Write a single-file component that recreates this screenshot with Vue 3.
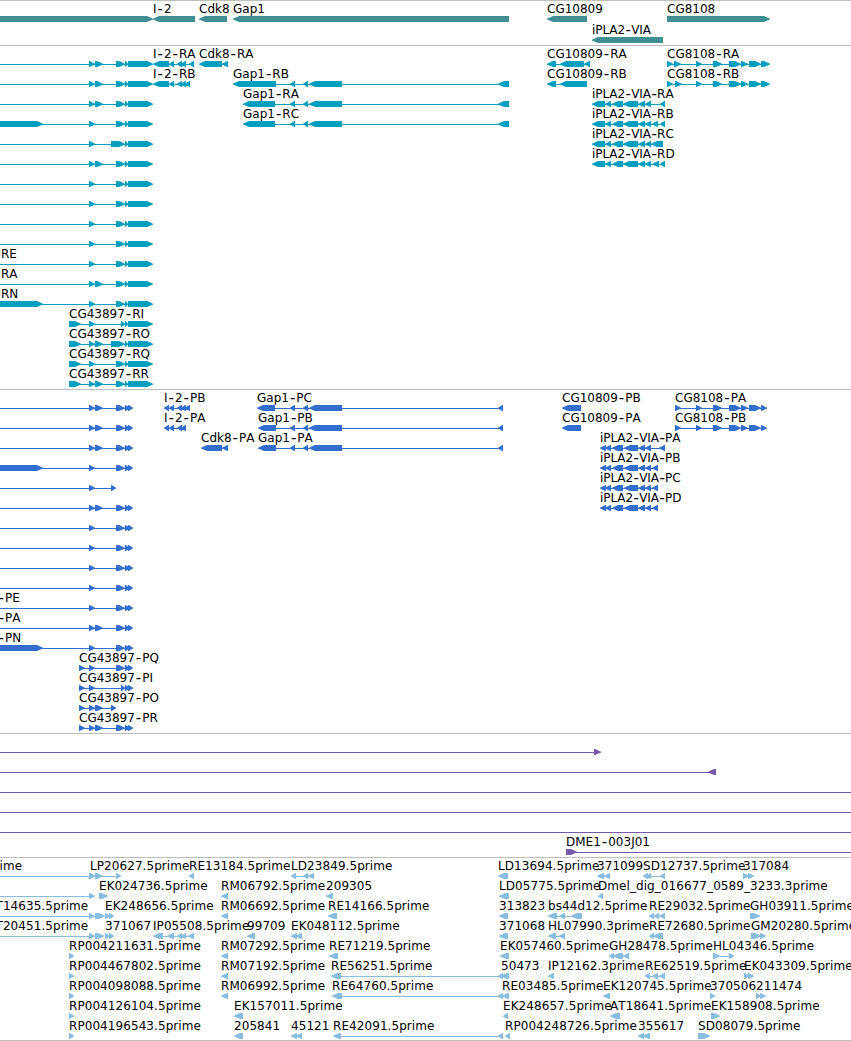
<script setup>
// 每条记录: [行, 方向, 标签, 标签x, 外显子, 连线起点, 连线终点]
const WIDTH = 851;
const OUT = 860;

const rnaTail = "116,125 125,128 128,153";
const cdsTail = "116,125 125,130 128,133";

const tracks = [
  {
    name: "gene",
    height: 44,
    step: 21,
    items: [
      [0, ">", "", 0, "-8,153"],
      [0, "<", "I-2", 153, "153,195"],
      [0, "<", "Cdk8", 199, "199,227"],
      [0, "<", "Gap1", 233, "233,509"],
      [0, "<", "CG10809", 547, "547,587"],
      [0, ">", "CG8108", 667, "667,770"],
      [1, "<", "iPLA2-VIA", 592, "592,663"],
    ],
  },
  {
    name: "rna",
    height: 343,
    step: 20,
    items: [
      [0, ">", "", 0, `89,95 95,103 ${rnaTail}`, -5],
      [1, ">", "", 0, `89,95 95,103 ${rnaTail}`, -5],
      [2, ">", "", 0, `89,95 95,103 ${rnaTail}`, -5],
      [3, ">", "", 0, `-8,43 89,95 ${rnaTail}`],
      [4, ">", "", 0, "89,95 111,125 125,128 128,153", -5],
      [5, ">", "", 0, `89,95 95,103 ${rnaTail}`, -5],
      [6, ">", "", 0, `89,95 ${rnaTail}`, -5],
      [7, ">", "", 0, `89,95 ${rnaTail}`, -5],
      [8, ">", "", 0, `89,95 ${rnaTail}`, -5],
      [9, ">", "", 0, `89,95 ${rnaTail}`, -5],
      [10, ">", "RE", 1, `89,95 ${rnaTail}`, -5],
      [11, ">", "RA", 1, `89,95 95,103 ${rnaTail}`, -5],
      [12, ">", "RN", 1, `-8,43 89,95 ${rnaTail}`],
      [13, ">", "CG43897-RI", 69, "69,81 89,95 121,125 125,128 128,153"],
      [14, ">", "CG43897-RO", 69, "69,81 89,95 95,103 111,125 125,128 128,153"],
      [15, ">", "CG43897-RQ", 69, `69,81 89,95 ${rnaTail}`],
      [16, ">", "CG43897-RR", 69, `69,81 89,95 95,103 ${rnaTail}`],
      [0, "<", "I-2-RA", 153, "153,169 169,174 177,182 181,186 189,194"],
      [1, "<", "I-2-RB", 153, "153,169 169,174 177,182 181,186 185,190"],
      [0, "<", "Cdk8-RA", 199, "199,222 222,228"],
      [1, "<", "Gap1-RB", 233, "233,276 290,295 303,308 309,342 498,509"],
      [2, "<", "Gap1-RA", 243, "243,275 290,295 303,308 309,342 498,509"],
      [3, "<", "Gap1-RC", 243, "243,275 290,295 303,308 309,342 498,509"],
      [0, "<", "CG10809-RA", 547, "547,556 560,584 584,590"],
      [1, "<", "CG10809-RB", 547, "547,556 560,587"],
      [0, ">", "CG8108-RA", 667, "667,673 674,681 696,702 713,722 729,741 741,748 749,761 761,770"],
      [1, ">", "CG8108-RB", 667, "667,673 675,682 696,702 713,722 729,741 741,748 749,761 761,770"],
      [2, "<", "iPLA2-VIA-RA", 592, "592,605 605,611 612,623 623,638 638,645 645,651 660,665"],
      [3, "<", "iPLA2-VIA-RB", 592, "592,605 605,611 612,623 623,638 638,645 645,651 652,658 660,665"],
      [4, "<", "iPLA2-VIA-RC", 592, "592,605 605,611 612,623 623,638 638,645 645,651 651,663"],
      [5, "<", "iPLA2-VIA-RD", 592, "592,605 605,611 612,623 623,638 638,645 645,651 652,659 660,665"],
    ],
  },
  {
    name: "cds",
    height: 343,
    step: 20,
    items: [
      [0, ">", "", 0, `89,95 95,103 ${cdsTail}`, -5],
      [1, ">", "", 0, `89,95 95,103 ${cdsTail}`, -5],
      [2, ">", "", 0, `89,95 95,103 ${cdsTail}`, -5],
      [3, ">", "", 0, `-8,43 89,95 ${cdsTail}`],
      [4, ">", "", 0, "89,95 111,116", -5],
      [5, ">", "", 0, `89,95 95,103 ${cdsTail}`, -5],
      [6, ">", "", 0, `89,95 ${cdsTail}`, -5],
      [7, ">", "", 0, `89,95 ${cdsTail}`, -5],
      [8, ">", "", 0, `89,95 ${cdsTail}`, -5],
      [9, ">", "", 0, `89,95 ${cdsTail}`, -5],
      [10, ">", "-PE", -1.5, `89,95 ${cdsTail}`, -5],
      [11, ">", "-PA", -1.5, `89,95 95,103 ${cdsTail}`, -5],
      [12, ">", "-PN", -1.5, `-8,43 89,95 ${cdsTail}`],
      [13, ">", "CG43897-PQ", 79, `79,85 89,95 ${cdsTail}`],
      [14, ">", "CG43897-PI", 79, "79,85 89,95 121,125 125,130 128,133"],
      [15, ">", "CG43897-PO", 79, "79,85 89,95 95,103 111,116"],
      [16, ">", "CG43897-PR", 79, `79,85 89,95 95,103 ${cdsTail}`],
      [0, "<", "I-2-PB", 164, "164,169 169,174 177,182 181,186 185,190"],
      [1, "<", "I-2-PA", 164, "164,169 169,174 177,182 181,186"],
      [2, "<", "Cdk8-PA", 201, "201,222 222,228"],
      [0, "<", "Gap1-PC", 257, "257,275 290,295 303,308 309,342 498,503"],
      [1, "<", "Gap1-PB", 258, "258,276 290,295 303,308 309,342 498,503"],
      [2, "<", "Gap1-PA", 258, "258,276 290,295 303,308 309,342 498,503"],
      [0, "<", "CG10809-PB", 562, "562,581"],
      [1, "<", "CG10809-PA", 562, "562,581"],
      [0, ">", "CG8108-PA", 675, "675,681 696,702 713,722 729,741 741,748 749,761 761,767"],
      [1, ">", "CG8108-PB", 675, "675,681 696,702 713,722 729,741 741,748 749,761 761,767"],
      [2, "<", "iPLA2-VIA-PA", 600, "600,606 605,611 612,623 624,638 638,645 645,651 659,665"],
      [3, "<", "iPLA2-VIA-PB", 600, "600,606 605,611 612,623 624,638 638,645 645,651 652,658"],
      [4, "<", "iPLA2-VIA-PC", 600, "600,606 605,611 612,623 624,638 638,645 645,651 652,658"],
      [5, "<", "iPLA2-VIA-PD", 600, "600,606 605,611 612,623 624,638 638,645 645,651 652,658"],
    ],
  },
  {
    name: "bac",
    height: 123,
    step: 20,
    items: [
      [0, ">", "", 0, "594,601", -5],
      [1, "<", "", 0, "708,716", -5],
      [2, ">", "", 0, "", -5, OUT],
      [3, ">", "", 0, "", -5, OUT],
      [4, ">", "", 0, "", -5, OUT],
      [5, ">", "DME1-003J01", 566, "566,577", 566, OUT],
    ],
  },
  {
    name: "est",
    height: 182,
    step: 20,
    items: [
      [0, ">", "ime", -0.5, "89,95", -5],
      [0, ">", "LP20627.5prime", 90, "90,95 95,103 116,121"],
      [0, "<", "RE13184.5prime", 189, "189,194"],
      [0, "<", "LD23849.5prime", 291, "291,296 303,308 308,314"],
      [0, "<", "LD13694.5prime", 498, "498,508"],
      [0, "<", "371099", 597, "597,604 604,610"],
      [0, "<", "SD12737.5prime", 643, "643,648 647,651 660,665"],
      [0, ">", "317084", 743, "743,749 748,754"],

      [1, ">", "", 0, "89,95", -5],
      [1, ">", "EK024736.5prime", 99, "99,108"],
      [1, "<", "RM06792.5prime", 221, "221,228"],
      [1, "<", "209305", 326, "326,333"],
      [1, "<", "LD05775.5prime", 499, "499,509"],
      [1, "<", "Dmel_dig_016677_0589_3233.3prime", 598, "598,603"],

      [2, ">", "T14635.5prime", -4.5, "89,95 95,105", -5],
      [2, ">", "EK248656.5prime", 105, "105,110 109,114"],
      [2, "<", "RM06692.5prime", 221, "221,228"],
      [2, "<", "RE14166.5prime", 328, "328,337"],
      [2, "<", "313823", 499, "499,508"],
      [2, "<", "bs44d12.5prime", 548, "548,557 559,565 571,582"],
      [2, "<", "RE29032.5prime", 649, "649,654 654,659 659,665"],
      [2, ">", "GH03911.5prime", 750, "750,760"],

      [3, ">", "T20451.5prime", -4.5, "89,95 95,104", -5],
      [3, ">", "371067", 105, "105,110 109,114"],
      [3, "<", "IP05508.5prime", 153, "153,163 167,174 177,182 181,186 188,194"],
      [3, "<", "99709", 247, "247,255"],
      [3, "<", "EK048112.5prime", 291, "291,297 296,302"],
      [3, "<", "371068", 499, "499,508"],
      [3, "<", "HL07990.3prime", 548, "548,556 559,565"],
      [3, "<", "RE72680.5prime", 649, "649,654 653,663"],
      [3, ">", "GM20280.5prime", 751, "751,761 760,766"],

      [4, ">", "RP004211631.5prime", 69, "69,74"],
      [4, "<", "RM07292.5prime", 221, "221,228"],
      [4, "<", "RE71219.5prime", 329, "329,338"],
      [4, "<", "EK057460.5prime", 500, "500,509"],
      [4, "<", "GH28478.5prime", 609, "609,614 613,623 623,629"],
      [4, ">", "HL04346.5prime", 713, "713,720 729,734"],

      [5, ">", "RP004467802.5prime", 69, "69,74"],
      [5, "<", "RM07192.5prime", 221, "221,228"],
      [5, "<", "RE56251.5prime", 331, "331,341 498,503"],
      [5, "<", "50473", 501, "501,509"],
      [5, "<", "IP12162.3prime", 548, "548,554"],
      [5, "<", "RE62519.5prime", 645, "645,650 652,658 659,665"],
      [5, ">", "EK043309.5prime", 744, "744,749 748,754"],

      [6, ">", "RP004098088.5prime", 69, "69,74"],
      [6, "<", "RM06992.5prime", 221, "221,228"],
      [6, "<", "RE64760.5prime", 332, "332,342 498,503"],
      [6, "<", "RE03485.5prime", 502, "502,509"],
      [6, "<", "EK120745.5prime", 603, "603,610"],
      [6, ">", "370506", 710, "710,715"],
      [6, ">", "211474", 756, "756,761 760,766"],

      [7, ">", "RP004126104.5prime", 69, "69,74"],
      [7, "<", "EK157011.5prime", 234, "234,243"],
      [7, "<", "EK248657.5prime", 503, "503,508"],
      [7, "<", "AT18641.5prime", 610, "610,620"],
      [7, ">", "EK158908.5prime", 711, "711,720"],

      [8, ">", "RP004196543.5prime", 69, "69,74"],
      [8, "<", "205841", 234, "234,243"],
      [8, "<", "45121", 291, "291,297 296,302"],
      [8, "<", "RE42091.5prime", 333, "333,341 498,503"],
      [8, "<", "RP004248726.5prime", 505, "505,510"],
      [8, "<", "355617", 638, "638,644 643,650"],
      [8, ">", "SD08079.5prime", 698, "698,710"],
    ],
  },
];

// 带箭头的外显子
function exonPath(a, b, dir, top) {
  const head = Math.min(b - a - 0.6, 6);
  const bottom = top + 6;
  const [tail, tip, s] = dir === ">" ? [a, b, 1] : [b, a, -1];
  const neck = tip - s * head;
  return (
    `M${tail} ${top}H${neck}L${tip} ${top + 2.7}` +
    `V${top + 3.5}L${neck} ${bottom}H${tail}Z`
  );
}

// 拆分标签，连字符单独加宽
function splitLabel(label) {
  const gap = label.startsWith("iPLA2") ? 0.3 : 1;
  return label
    .split(/(-)/)
    .filter(Boolean)
    .map((text, i) => {
      const dash = text === "-";
      return {
        text,
        dash,
        dx: i ? gap : 0,
        dy: dash ? 0.5 : i ? -0.5 : 0,
      };
    });
}

function build(track) {
  return track.items.map(([row, dir, label, x, exonText, from, to]) => {
    const top = 15 + row * track.step;
    const exons = exonText
      ? exonText.split(" ").map((p) => p.split(",").map(Number))
      : [];
    const start = from ?? exons[0][0];
    const end = to ?? exons[exons.length - 1][1];
    const hasLine = exons.length !== 1 || from !== undefined;
    return {
      parts: splitLabel(label),
      x,
      baseline: 12 + row * track.step,
      lineY: top + 3,
      start: start + (dir === "<" && start > 0 ? 2 : 0),
      width: hasLine ? end - start - 2 : 0,
      path: exons.map(([a, b]) => exonPath(a, b, dir, top)).join(""),
    };
  });
}

const views = tracks.map((t) => ({ ...t, features: build(t) }));
</script>

<template>
  <main class="browser">
    <section v-for="t in views" :key="t.name" class="track" :class="t.name">
      <svg class="canvas" :width="WIDTH" :height="t.height">
        <g v-for="(f, i) in t.features" :key="i">
          <rect
            v-if="f.width"
            class="shape"
            :x="f.start"
            :y="f.lineY"
            :width="f.width"
            height="1"
          />
          <path class="shape" :d="f.path" />
        </g>
        <template v-for="(f, i) in t.features" :key="i">
          <text v-if="f.parts.length" class="label" :x="f.x" :y="f.baseline"><tspan v-for="(p, k) in f.parts" :key="k" :class="{ dash: p.dash }" :dx="p.dx" :dy="p.dy">{{ p.text }}</tspan></text>
        </template>
      </svg>
    </section>
  </main>
</template>

<style>
body {
  margin: 0;
  background: #fff;
}
</style>

<style scoped>
.browser {
  width: 851px;
  overflow: hidden;
  background: #fff;
  border-bottom: 1px solid #bebebe;
}

.track {
  border-top: 1px solid #bebebe;
}

.canvas {
  display: block;
  overflow: visible;
}

.label {
  font-family: "DejaVu Sans", sans-serif;
  font-size: 12px;
  font-kerning: none;
  fill: #000;
}

.dash {
  font-size: 15px;
}

.gene .shape {
  fill: #3f8f95;
}

.rna .shape {
  fill: #009ebf;
}

.cds .shape {
  fill: #326ecd;
}

.bac .shape {
  fill: #7859a9;
}

.est .shape {
  fill: #88bddf;
}

.est .label {
  letter-spacing: 0.07px;
}
</style>
